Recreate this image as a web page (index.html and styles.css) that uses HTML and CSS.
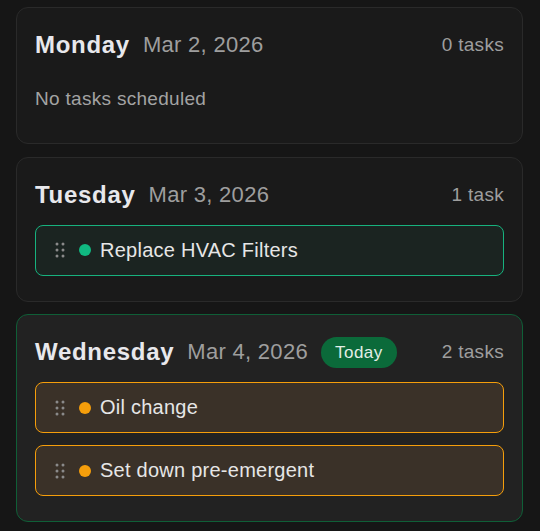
FILE: index.html
```html
<!DOCTYPE html>
<html lang="en">
<head>
    <meta charset="UTF-8">
    <meta name="viewport" content="width=device-width, initial-scale=1.0">
    <title>Week Schedule</title>
    <link rel="stylesheet" href="styles.css">
</head>
<body>
    <div class="week">
        <!-- Monday -->
        <section class="day-card">
            <div class="day-header">
                <div class="day-title">
                    <h2 class="day-name">Monday</h2>
                    <span class="day-date">Mar 2, 2026</span>
                </div>
                <span class="task-count">0 tasks</span>
            </div>
            <p class="empty-text">No tasks scheduled</p>
        </section>

        <!-- Tuesday -->
        <section class="day-card">
            <div class="day-header">
                <div class="day-title">
                    <h2 class="day-name">Tuesday</h2>
                    <span class="day-date">Mar 3, 2026</span>
                </div>
                <span class="task-count">1 task</span>
            </div>
            <ul class="task-list">
                <li class="task-item done">
                    <svg class="drag-handle" width="10" height="16" viewBox="0 0 10 16">
                        <circle cx="2" cy="2" r="1.5"/><circle cx="8" cy="2" r="1.5"/>
                        <circle cx="2" cy="8" r="1.5"/><circle cx="8" cy="8" r="1.5"/>
                        <circle cx="2" cy="14" r="1.5"/><circle cx="8" cy="14" r="1.5"/>
                    </svg>
                    <span class="status-dot"></span>
                    <span class="task-name">Replace HVAC Filters</span>
                </li>
            </ul>
        </section>

        <!-- Wednesday (today) -->
        <section class="day-card today">
            <div class="day-header">
                <div class="day-title">
                    <h2 class="day-name">Wednesday</h2>
                    <span class="day-date">Mar 4, 2026</span>
                    <span class="today-badge">Today</span>
                </div>
                <span class="task-count">2 tasks</span>
            </div>
            <ul class="task-list">
                <li class="task-item pending">
                    <svg class="drag-handle" width="10" height="16" viewBox="0 0 10 16">
                        <circle cx="2" cy="2" r="1.5"/><circle cx="8" cy="2" r="1.5"/>
                        <circle cx="2" cy="8" r="1.5"/><circle cx="8" cy="8" r="1.5"/>
                        <circle cx="2" cy="14" r="1.5"/><circle cx="8" cy="14" r="1.5"/>
                    </svg>
                    <span class="status-dot"></span>
                    <span class="task-name">Oil change</span>
                </li>
                <li class="task-item pending">
                    <svg class="drag-handle" width="10" height="16" viewBox="0 0 10 16">
                        <circle cx="2" cy="2" r="1.5"/><circle cx="8" cy="2" r="1.5"/>
                        <circle cx="2" cy="8" r="1.5"/><circle cx="8" cy="8" r="1.5"/>
                        <circle cx="2" cy="14" r="1.5"/><circle cx="8" cy="14" r="1.5"/>
                    </svg>
                    <span class="status-dot"></span>
                    <span class="task-name">Set down pre-emergent</span>
                </li>
            </ul>
        </section>
    </div>
</body>
</html>
```

FILE: styles.css
```css
* {
    margin: 0;
    padding: 0;
    box-sizing: border-box;
}

body {
    font-family: 'Liberation Sans', Arial, sans-serif;
    background: #161616;
    color: #e6e6e6;
}

.week {
    display: flex;
    flex-direction: column;
    gap: 12.5px;
    padding: 7px 17px 0 16px;
}

/* Day cards */
.day-card {
    background: #1a1a1a;
    border: 1px solid #2a2a2a;
    border-radius: 12px;
    padding: 19px 18px;
}

.day-card.today {
    background: #222222;
    border-color: #0f5f37;
}

.day-header {
    display: flex;
    justify-content: space-between;
    align-items: center;
    height: 36px;
}

.day-title {
    display: flex;
    align-items: center;
    gap: 13px;
}

.day-name {
    font-size: 24px;
    font-weight: bold;
    color: #e8e8ec;
    line-height: 36px;
    letter-spacing: 0.7px;
}

.day-date {
    font-size: 22px;
    color: #9e9e9e;
    letter-spacing: 0.3px;
}

.today-badge {
    background: #0b6a3a;
    color: #e3efe7;
    font-size: 17px;
    line-height: 31px;
    padding: 0 14px;
    border-radius: 16px;
    letter-spacing: 0.5px;
}

.task-count {
    font-size: 19px;
    color: #9e9e9e;
    letter-spacing: 0.3px;
}

.empty-text {
    margin-top: 12px;
    padding: 10px 0 11px;
    font-size: 19px;
    line-height: 28px;
    color: #a3a3a3;
    letter-spacing: 0.3px;
}

/* Task list */
.task-list {
    list-style: none;
    display: flex;
    flex-direction: column;
    gap: 12px;
    margin-top: 12px;
    padding-bottom: 6px;
}

.task-item {
    display: flex;
    align-items: center;
    border: 1px solid;
    border-radius: 8px;
    padding: 11px 19px;
    font-size: 20px;
    line-height: 27px;
    letter-spacing: 0.25px;
}

.task-item.done {
    background: #1b2421;
    border-color: #17b27e;
}

.task-item.pending {
    background: #3a3128;
    border-color: #f59e0b;
}

.drag-handle {
    fill: #8a8a8a;
    margin-right: 14px;
    flex-shrink: 0;
}

.status-dot {
    width: 12px;
    height: 12px;
    border-radius: 50%;
    margin-right: 9px;
    flex-shrink: 0;
}

.done .status-dot {
    background: #10b981;
}

.pending .status-dot {
    background: #f59e0b;
}

.task-name {
    color: #e6e6e6;
}
```
